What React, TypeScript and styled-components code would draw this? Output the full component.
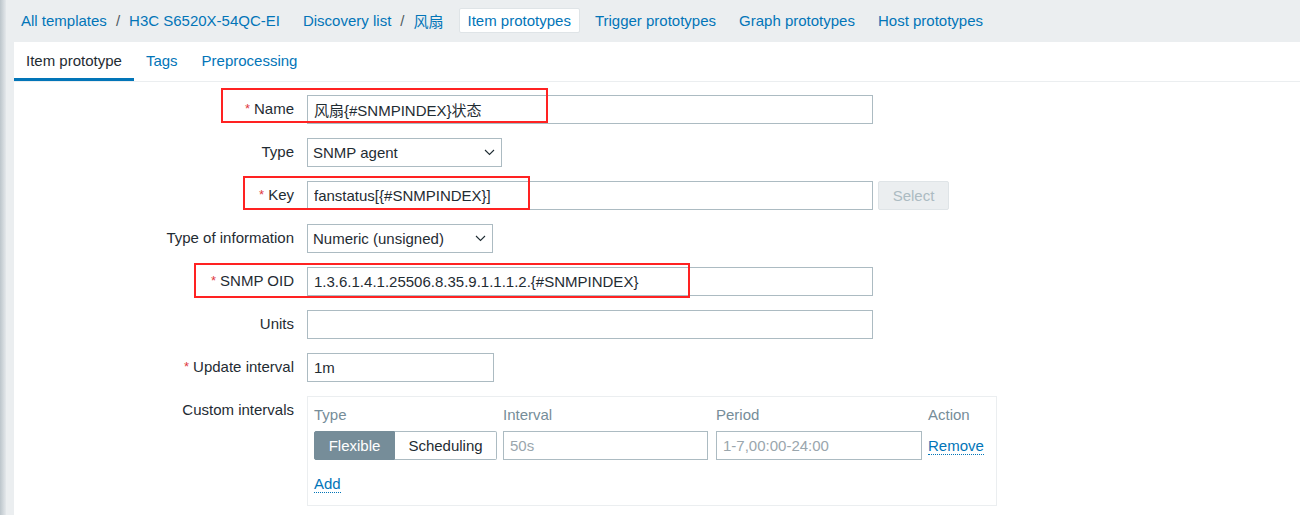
import React from 'react';
import styled, { createGlobalStyle } from 'styled-components';

const GlobalStyle = createGlobalStyle`
  body {
    margin: 0;
    background-color: #ebeef0;
    font-family: "Liberation Sans", Arial, "Noto Sans CJK SC", sans-serif;
    font-size: 15px;
    color: #1f2c33;
  }
`;

const Page = styled.div`
  position: relative;
  display: flex;
  flex-direction: column;
  height: 515px;
  overflow: hidden;

  &::before {
    content: '';
    position: absolute;
    left: 0;
    top: 0;
    bottom: 0;
    width: 6px;
    background: linear-gradient(to right, #bcc5cb, #e4e8eb);
  }
`;

const TopBar = styled.nav`
  display: flex;
  align-items: center;
  height: 42px;
  box-sizing: border-box;
  padding: 0 0 2px 9px;
  flex-shrink: 0;
`;

const Crumbs = styled.div`
  display: flex;
  align-items: center;
  padding: 0 11px 0 12px;
  white-space: nowrap;
`;

const NavLink = styled.a`
  color: #0275b8;
  text-decoration: none;
  white-space: nowrap;
`;

const Sep = styled.span`
  margin: 0 9px;
  color: #4f5a60;
`;

const NavPill = styled.a`
  display: flex;
  align-items: center;
  height: 25px;
  box-sizing: border-box;
  margin: 0 3px 0 4px;
  padding: 0 8px;
  background: #ffffff;
  border: 1px solid #dfe4e7;
  border-radius: 2px;
  color: #0275b8;
  white-space: nowrap;
`;

const Panel = styled.main`
  position: relative;
  flex: 1;
  margin-left: 14px;
  background: #ffffff;
`;

const TabBar = styled.div`
  display: flex;
  border-bottom: 1px solid #ebeef0;
`;

const Tab = styled.div<{ $active?: boolean }>`
  display: flex;
  align-items: center;
  height: 39px;
  box-sizing: border-box;
  padding: 0 12px;
  border-bottom: 3px solid ${(p) => (p.$active ? '#0275b8' : 'transparent')};
  color: ${(p) => (p.$active ? '#1f2c33' : '#0275b8')};
`;

const Form = styled.div`
  display: grid;
  grid-template-columns: 280px auto;
  column-gap: 13px;
  row-gap: 14px;
  padding-top: 13px;
  justify-items: start;
`;

const Label = styled.div`
  justify-self: end;
  align-self: start;
  line-height: 27px;
  white-space: nowrap;
`;

const Req = styled.span`
  color: #e0393e;
  font-size: 13px;
  margin-right: 4px;
  vertical-align: 1px;
`;

const Field = styled.div`
  display: flex;
  gap: 5px;
`;

const TextInput = styled.input<{ $w: number }>`
  width: ${(p) => p.$w}px;
  height: 29px;
  box-sizing: border-box;
  padding: 0 6px;
  border: 1px solid #acbbc2;
  border-radius: 0;
  font: inherit;
  color: #1f2c33;
  background: #ffffff;
  outline: none;

  &::placeholder {
    color: #9aa6ad;
  }
`;

const Select = styled.div<{ $w: number }>`
  display: flex;
  align-items: center;
  justify-content: space-between;
  width: ${(p) => p.$w}px;
  height: 29px;
  box-sizing: border-box;
  padding: 0 6px 0 5px;
  border: 1px solid #acbbc2;
  background: #ffffff;
  white-space: nowrap;
`;

const SelectButton = styled.button`
  width: 71px;
  height: 29px;
  box-sizing: border-box;
  border: 1px solid #dfe4e7;
  border-radius: 2px;
  background: #ebeef0;
  color: #acbbc2;
  font: inherit;
`;

const IntervalBox = styled.div`
  width: 690px;
  box-sizing: border-box;
  border: 1px solid #ebeef0;
  padding: 3px 7px 7px 6px;
`;

const IntervalGrid = styled.div`
  display: grid;
  grid-template-columns: 189px 213px 212px auto;
  grid-auto-rows: 29px;
  row-gap: 2px;
  align-items: center;
`;

const HeadCell = styled.div`
  color: #768d99;
`;

const Segmented = styled.div`
  display: flex;
  width: 183px;
  height: 29px;
`;

const SegButton = styled.div<{ $active?: boolean; $w: number }>`
  display: flex;
  align-items: center;
  justify-content: center;
  width: ${(p) => p.$w}px;
  box-sizing: border-box;
  border: 1px solid ${(p) => (p.$active ? '#768d99' : '#acbbc2')};
  border-left-width: ${(p) => (p.$active ? '1px' : '0')};
  border-radius: ${(p) => (p.$active ? '2px 0 0 2px' : '0 2px 2px 0')};
  background: ${(p) => (p.$active ? '#768d99' : '#ffffff')};
  color: ${(p) => (p.$active ? '#ffffff' : '#1f2c33')};
`;

const DottedLink = styled.a`
  justify-self: start;
  color: #0275b8;
  text-decoration: none;
  border-bottom: 1px dotted #0275b8;
  line-height: 17px;
`;

const AddRow = styled.div`
  display: flex;
  align-items: center;
  height: 29px;
  margin-top: 9px;
`;

const Mark = styled.div<{ $x: number; $y: number; $w: number; $h: number }>`
  position: absolute;
  left: ${(p) => p.$x}px;
  top: ${(p) => p.$y}px;
  width: ${(p) => p.$w}px;
  height: ${(p) => p.$h}px;
  box-sizing: border-box;
  border: 2px solid #ff2222;
  pointer-events: none;
`;

const Chevron = () => (
  <svg width="11" height="7" viewBox="0 0 11 7">
    <polyline points="1,1 5.5,5.5 10,1" fill="none" stroke="#1f2c33" strokeWidth="1.1" />
  </svg>
);

function App(): JSX.Element {
  return (
    <Page>
      <GlobalStyle />
      <TopBar>
        <Crumbs>
          <NavLink>All templates</NavLink>
          <Sep>/</Sep>
          <NavLink>H3C S6520X-54QC-EI</NavLink>
        </Crumbs>
        <Crumbs>
          <NavLink>Discovery list</NavLink>
          <Sep>/</Sep>
          <NavLink>风扇</NavLink>
        </Crumbs>
        <NavPill>Item prototypes</NavPill>
        <Crumbs>
          <NavLink>Trigger prototypes</NavLink>
        </Crumbs>
        <Crumbs>
          <NavLink>Graph prototypes</NavLink>
        </Crumbs>
        <Crumbs>
          <NavLink>Host prototypes</NavLink>
        </Crumbs>
      </TopBar>

      <Panel>
        <TabBar>
          <Tab $active>Item prototype</Tab>
          <Tab>Tags</Tab>
          <Tab>Preprocessing</Tab>
        </TabBar>

        <Form>
          <Label>
            <Req>*</Req>Name
          </Label>
          <Field>
            <TextInput $w={566} readOnly value="风扇{#SNMPINDEX}状态" />
          </Field>

          <Label>Type</Label>
          <Field>
            <Select $w={195}>
              SNMP agent
              <Chevron />
            </Select>
          </Field>

          <Label>
            <Req>*</Req>Key
          </Label>
          <Field>
            <TextInput $w={566} readOnly value="fanstatus[{#SNMPINDEX}]" />
            <SelectButton disabled>Select</SelectButton>
          </Field>

          <Label>Type of information</Label>
          <Field>
            <Select $w={186}>
              Numeric (unsigned)
              <Chevron />
            </Select>
          </Field>

          <Label>
            <Req>*</Req>SNMP OID
          </Label>
          <Field>
            <TextInput $w={566} readOnly value="1.3.6.1.4.1.25506.8.35.9.1.1.1.2.{#SNMPINDEX}" />
          </Field>

          <Label>Units</Label>
          <Field>
            <TextInput $w={566} readOnly value="" />
          </Field>

          <Label>
            <Req>*</Req>Update interval
          </Label>
          <Field>
            <TextInput $w={187} readOnly value="1m" />
          </Field>

          <Label>Custom intervals</Label>
          <IntervalBox>
            <IntervalGrid>
              <HeadCell>Type</HeadCell>
              <HeadCell>Interval</HeadCell>
              <HeadCell>Period</HeadCell>
              <HeadCell>Action</HeadCell>

              <Segmented>
                <SegButton $active $w={81}>Flexible</SegButton>
                <SegButton $w={102}>Scheduling</SegButton>
              </Segmented>
              <TextInput $w={205} readOnly placeholder="50s" />
              <TextInput $w={206} readOnly placeholder="1-7,00:00-24:00" />
              <DottedLink>Remove</DottedLink>
            </IntervalGrid>
            <AddRow>
              <DottedLink>Add</DottedLink>
            </AddRow>
          </IntervalBox>
        </Form>

        <Mark $x={207} $y={46} $w={327} $h={35} />
        <Mark $x={229} $y={134} $w={287} $h={34} />
        <Mark $x={180} $y={221} $w={496} $h={35} />
      </Panel>
    </Page>
  );
}

export default App;
